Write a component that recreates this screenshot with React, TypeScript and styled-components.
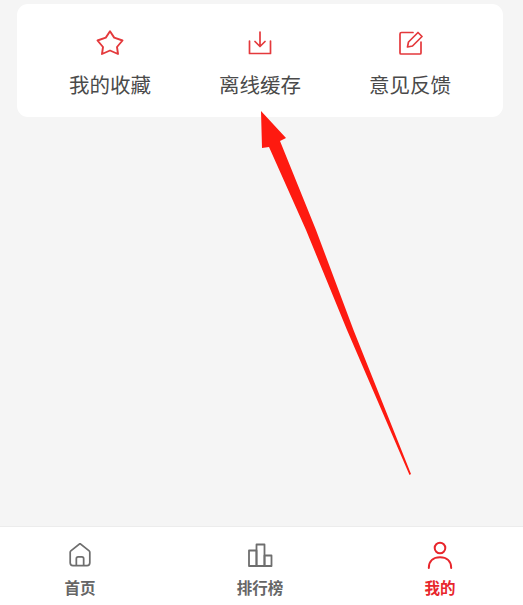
// @ts-nocheck
import React from 'react';
import styled, { createGlobalStyle } from 'styled-components';

const GlobalStyle = createGlobalStyle`
  html, body { margin: 0; padding: 0; height: 100%; }
  body { font-family: "Noto Sans CJK SC", "Noto Sans", sans-serif; background: #f5f5f5; }
`;

const Page = styled.div`
  position: relative;
  display: flex;
  flex-direction: column;
  width: 523px;
  height: 605px;
  overflow: hidden;
  background: #f5f5f5;
`;

const Content = styled.main`
  flex: 1;
  padding: 4px 20px 0 17px;
`;

const Card = styled.section`
  display: grid;
  grid-template-columns: repeat(3, 150px);
  height: 113px;
  padding: 0 18px;
  box-sizing: border-box;
  background: #fff;
  border-radius: 11px;
`;

const CardItem = styled.div`
  display: flex;
  flex-direction: column;
  align-items: center;
  padding-top: 25px;
`;

const IconSlot = styled.div`
  display: flex;
  align-items: center;
  justify-content: center;
  height: 28px;
`;

const CardLabel = styled.span`
  margin-top: 13px;
  font-size: 20.5px;
  line-height: 28px;
  color: #4a4a4a;
  white-space: nowrap;
`;

const TabBar = styled.nav`
  display: flex;
  justify-content: space-between;
  height: 79px;
  padding: 0 53px 0 50px;
  box-sizing: border-box;
  background: #fff;
  border-top: 1px solid #ececec;
`;

const Tab = styled.div`
  display: flex;
  flex-direction: column;
  align-items: center;
  width: 60px;
  padding-top: 14px;
`;

const TabLabel = styled.span<{ active?: boolean }>`
  margin-top: 7px;
  font-size: 15.5px;
  line-height: 22px;
  font-weight: 700;
  white-space: nowrap;
  color: ${(props) => (props.active ? '#e8262c' : '#666')};
`;

const ArrowOverlay = styled.svg`
  position: absolute;
  left: 0;
  top: 0;
  pointer-events: none;
`;

const StarIcon = () => (
  <svg width="30" height="28" viewBox="0 0 30 28" fill="none" stroke="#e4393c" strokeWidth="1.9" strokeLinejoin="round">
    <path d="M15 2.300L19.200 8.600L27.500 11.500L22 18L23 25L15 21.500L7 25L8 18L2.500 11.500L10.800 8.600z" />
  </svg>
);

const DownloadIcon = () => (
  <svg width="26" height="26" viewBox="0 0 26 26" fill="none" stroke="#e4393c" strokeWidth="1.7" strokeLinecap="round" strokeLinejoin="round">
    <path d="M13 2v14M8 11.500l5 5 5-5" />
    <path d="M2.500 11v12.500h21V11" />
  </svg>
);

const EditIcon = () => (
  <svg width="26" height="26" viewBox="-1 0 26 26" fill="none" stroke="#e4393c" strokeWidth="1.7" strokeLinecap="round" strokeLinejoin="round">
    <path d="M15 2.500H3.500a1.500 1.500 0 0 0-1.500 1.500v19a1 1 0 0 0 1 1h19a1 1 0 0 0 1-1V12" />
    <path d="M9.500 17l1-5L20 2.500l4 4-9.500 9.500z" />
  </svg>
);

const HomeIcon = () => (
  <svg width="22" height="25" viewBox="0 1 24 27" fill="none" stroke="#6e6e6e" strokeWidth="1.9" strokeLinejoin="round">
    <path d="M12 1.500L2 9.500a2 2 0 0 0-.7 1.500v11.500a3 3 0 0 0 3 3h15.400a3 3 0 0 0 3-3V11a2 2 0 0 0-.7-1.500z" />
    <path d="M8 25.500V18a2 2 0 0 1 2-2h4a2 2 0 0 1 2 2v7.500" />
  </svg>
);

const RankIcon = () => (
  <svg width="26" height="26" viewBox="0 0 26 26" fill="none" stroke="#6e6e6e" strokeWidth="1.8" strokeLinejoin="round">
    <path d="M2 8.500h7.500V24H2z" />
    <path d="M9.500 2.500h8V24h-8z" />
    <path d="M17.500 13.500h7V24h-7z" />
  </svg>
);

const UserIcon = () => (
  <svg width="26" height="28" viewBox="0 0 26 28" fill="none" stroke="#e8262c" strokeWidth="2" strokeLinecap="round">
    <circle cx="13" cy="7" r="5.300" />
    <path d="M1.800 27c0-7 4.600-10.800 11.200-10.800S24.200 20 24.200 27" />
  </svg>
);

const cardItems = [
  { label: '我的收藏', icon: <StarIcon /> },
  { label: '离线缓存', icon: <DownloadIcon /> },
  { label: '意见反馈', icon: <EditIcon /> },
];

const tabs = [
  { label: '首页', icon: <HomeIcon /> },
  { label: '排行榜', icon: <RankIcon /> },
  { label: '我的', icon: <UserIcon />, active: true },
];

const App: React.FC = () => (
  <Page>
    <GlobalStyle />
    <Content>
      <Card>
        {cardItems.map((item) => (
          <CardItem key={item.label}>
            <IconSlot>{item.icon}</IconSlot>
            <CardLabel>{item.label}</CardLabel>
          </CardItem>
        ))}
      </Card>
    </Content>
    <TabBar>
      {tabs.map((tab) => (
        <Tab key={tab.label}>
          <IconSlot>{tab.icon}</IconSlot>
          <TabLabel active={tab.active}>{tab.label}</TabLabel>
        </Tab>
      ))}
    </TabBar>
    <ArrowOverlay width="523" height="605" viewBox="0 0 523 605">
      <path
        d="M261 111L286 138L280 141L316 230L353.500 330L411 474L409.500 475L347 330L306 230L269 147L262 148z"
        fill="#fe1a10"
      />
    </ArrowOverlay>
  </Page>
);

export default App;
